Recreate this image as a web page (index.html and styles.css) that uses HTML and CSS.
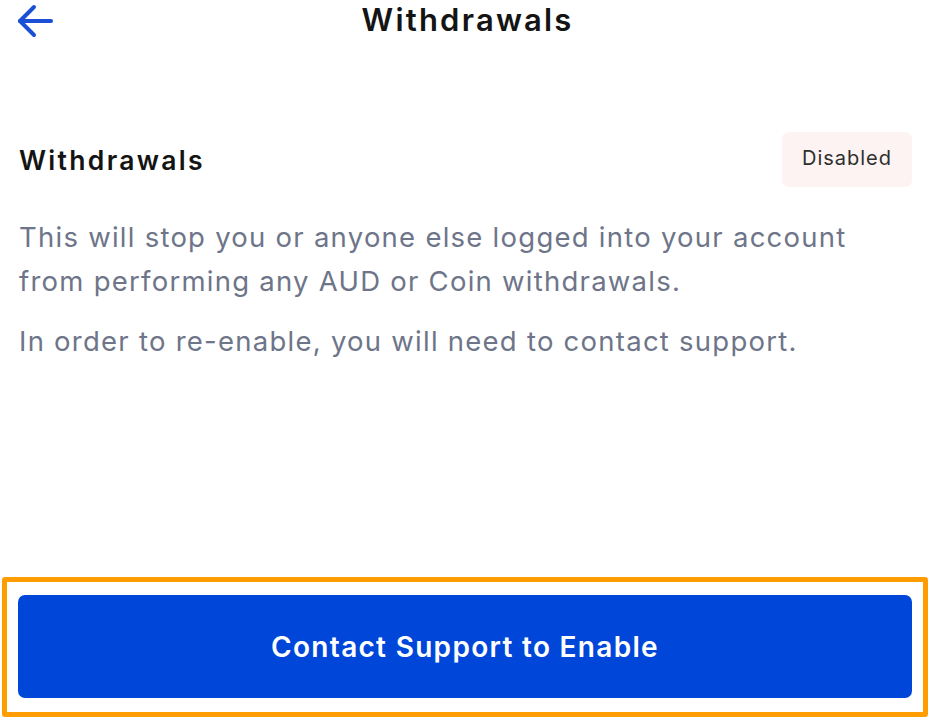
FILE: index.html
```html
<!DOCTYPE html>
<html lang="en">
<head>
<meta charset="utf-8">
<title>Withdrawals</title>
<link rel="stylesheet" href="styles.css">
</head>
<body>
<div class="page">
  <header class="topbar">
    <button class="back" aria-label="Back">
      <svg width="37" height="34" viewBox="0 0 37 34" fill="none" stroke="#1a4fd6" stroke-width="4" stroke-linecap="round" stroke-linejoin="round">
        <path d="M34 17H3"/>
        <path d="M17 3L3 17l14 14"/>
      </svg>
    </button>
    <h1 class="title">Withdrawals</h1>
    <span class="spacer"></span>
  </header>

  <main class="content">
    <div class="row">
      <h2 class="heading">Withdrawals</h2>
      <span class="badge">Disabled</span>
    </div>
    <p class="desc">This will stop you or anyone else logged into your account from performing any AUD or Coin withdrawals.</p>
    <p class="desc second">In order to re-enable, you will need to contact support.</p>
  </main>

  <footer class="footer">
    <button class="cta">Contact Support to Enable</button>
  </footer>
</div>
</body>
</html>
```

FILE: styles.css
```css
* { box-sizing: border-box; }
html, body {
  margin: 0;
  padding: 0;
  background: #ffffff;
}
body {
  font-family: Inter, "Noto Sans", "Liberation Sans", sans-serif;
  color: #141414;
}
.page {
  height: 723px;
  display: flex;
  flex-direction: column;
}
.topbar {
  height: 40px;
  display: grid;
  grid-template-columns: 1fr auto 1fr;
  align-items: center;
}
.back {
  justify-self: start;
  margin-left: 17px;
  padding: 0;
  border: 0;
  background: none;
  display: flex;
  margin-top: 2px;
}
.title {
  margin: 0;
  font-size: 31px;
  font-weight: 600;
  line-height: 40px;
  letter-spacing: 2.2px;
  margin-right: -2.2px;
  color: #141414;
}
.content {
  padding: 92px 21px 0 19px;
}
.row {
  display: flex;
  justify-content: space-between;
  align-items: center;
  height: 55px;
}
.heading {
  margin: 0;
  font-size: 26.5px;
  font-weight: 600;
  letter-spacing: 2.3px;
  color: #141414;
}
.badge {
  width: 130px;
  height: 55px;
  display: flex;
  align-items: center;
  justify-content: center;
  background: #fcf3f2;
  border-radius: 7px;
  font-size: 20px;
  letter-spacing: 1px;
  color: #2e2e2e;
  padding-bottom: 4px;
}
.desc {
  margin: 28px 0 0;
  font-size: 27.5px;
  line-height: 44px;
  letter-spacing: 1.25px;
  color: #6e7589;
}
.desc.second {
  margin-top: 16px;
}
.footer {
  margin-top: auto;
  margin-left: 2px;
  margin-bottom: 6px;
  width: 926px;
  border: 5px solid #ff9d00;
  border-radius: 3px;
  padding: 13px 11px 14px 11px;
}
.cta {
  display: block;
  width: 100%;
  height: 103px;
  border: 0;
  border-radius: 7px;
  background: #0047d9;
  color: #ffffff;
  font-family: Inter, "Noto Sans", "Liberation Sans", sans-serif;
  font-size: 28px;
  font-weight: 600;
  letter-spacing: 1.3px;
  padding: 0;
}
```
